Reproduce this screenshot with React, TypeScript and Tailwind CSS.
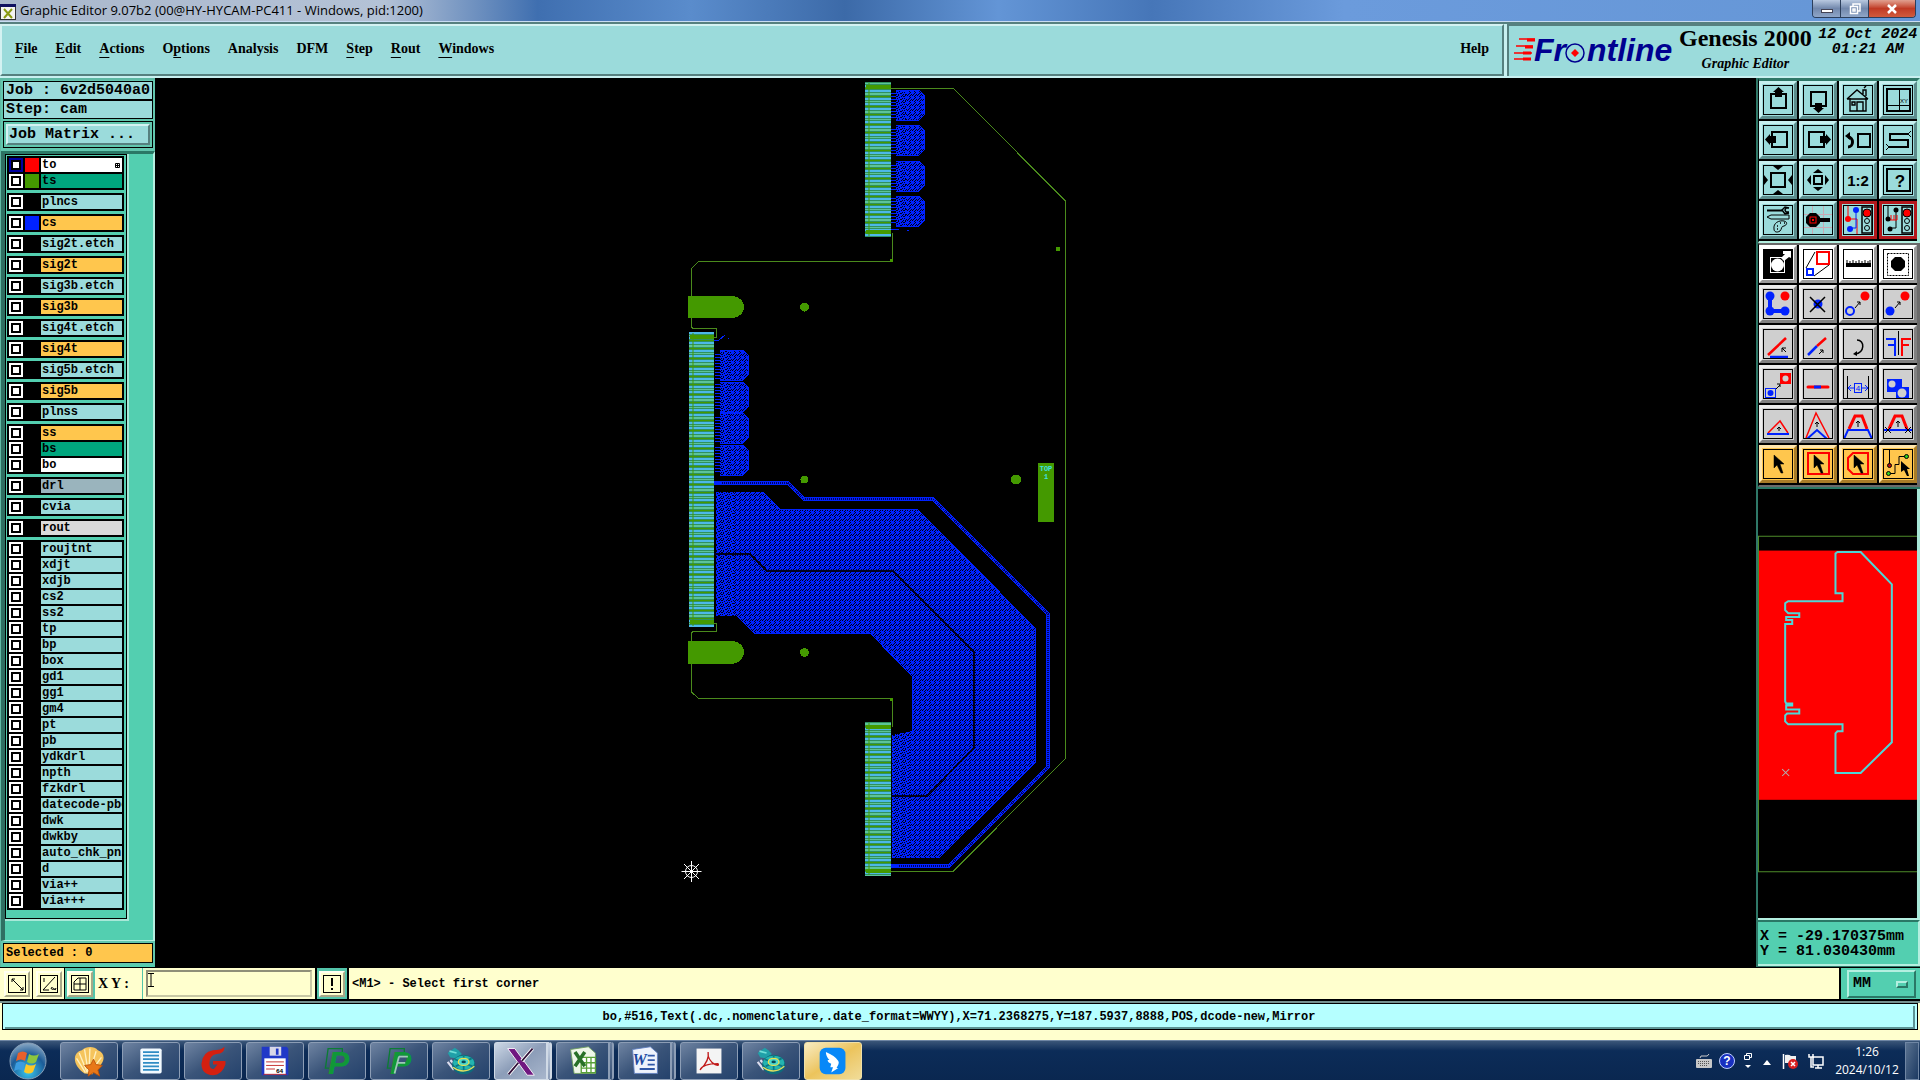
import { ReactNode, useState } from "react";
import { clsx } from "clsx";

interface Layer {
  name: string;
  tone: string;
  swatch?: string;
  on?: boolean;
}

const AQUA = "bg-[#9bdbdb]";
const GOLD = "bg-[#ffc64d]";
const GREEN = "bg-[#00a67e]";
const WHITE = "bg-white";

const layerGroups: Layer[][] = [
  [
    { name: "to", tone: WHITE, swatch: "bg-[#ff0000]", on: true },
    { name: "ts", tone: GREEN, swatch: "bg-[#449900]" },
  ],
  [{ name: "plncs", tone: AQUA }],
  [{ name: "cs", tone: GOLD, swatch: "bg-[#0022ff]" }],
  [{ name: "sig2t.etch", tone: AQUA }],
  [{ name: "sig2t", tone: GOLD }],
  [{ name: "sig3b.etch", tone: AQUA }],
  [{ name: "sig3b", tone: GOLD }],
  [{ name: "sig4t.etch", tone: AQUA }],
  [{ name: "sig4t", tone: GOLD }],
  [{ name: "sig5b.etch", tone: AQUA }],
  [{ name: "sig5b", tone: GOLD }],
  [{ name: "plnss", tone: AQUA }],
  [
    { name: "ss", tone: GOLD },
    { name: "bs", tone: GREEN },
    { name: "bo", tone: WHITE },
  ],
  [{ name: "drl", tone: "bg-[#9ab4bd]" }],
  [{ name: "cvia", tone: AQUA }],
  [{ name: "rout", tone: "bg-[#dadada]" }],
  [
    "roujtnt", "xdjt", "xdjb", "cs2", "ss2", "tp", "bp", "box", "gd1", "gg1",
    "gm4", "pt", "pb", "ydkdrl", "npth", "fzkdrl", "datecode-pbo", "dwk",
    "dwkby", "auto_chk_pnl", "d", "via++", "via+++",
  ].map((name) => ({ name, tone: AQUA })),
];

// [text before the mnemonic, mnemonic, rest]
const menus = [
  ["", "F", "ile"],
  ["", "E", "dit"],
  ["", "A", "ctions"],
  ["O", "p", "tions"],
  ["Analysis", "", ""],
  ["DFM", "", ""],
  ["", "S", "tep"],
  ["", "R", "out"],
  ["", "W", "indows"],
];

/* ---------- tool icons, all on a 30 x 30 grid ---------- */

const B = "#0022ff";
const R = "#ff0000";

interface Tool {
  label: string;
  art: ReactNode;
  kind?: "aqua" | "red" | "white" | "gray" | "gold";
}

const Traffic = () => (
  <>
    <rect x="19" y="2" width="10" height="26" fill="#9bdbdb" stroke="#000" strokeWidth="1.5" />
    <circle cx="24" cy="8" r="4" fill={R} stroke="#000" />
    <circle cx="24" cy="16" r="2.500" fill="none" stroke="#000" />
    <circle cx="24" cy="23" r="2.500" fill="none" stroke="#000" />
  </>
);

const Cursor = () => (
  <path d="M11 6v13l3-3 4 8h2l-3-9h4z" fill="#000" stroke="#000" strokeWidth="0.5" />
);

const viewTools: Tool[] = [
  {
    label: "Pan up",
    art: (
      <>
        <rect x="8" y="9" width="15" height="14" fill="none" stroke="#000" strokeWidth="2" />
        <path d="M15.500 2l5.500 5h-2v5h-7V7h-2z" />
      </>
    ),
  },
  {
    label: "Pan down",
    art: (
      <>
        <rect x="8" y="7" width="15" height="14" fill="none" stroke="#000" strokeWidth="2" />
        <path d="M15.500 28l5.500-5h-2v-5h-7v5h-2z" />
      </>
    ),
  },
  {
    label: "Home",
    art: (
      <g fill="none" stroke="#000" strokeWidth="1.400">
        <path d="M4 14L14 5l11 9M7 13v13h16V13M4 14h21M20 9V5h3v6M21 3l2-2" />
        <path d="M14 26v-9h6v9M9 17h3v3H9z" />
      </g>
    ),
  },
  {
    label: "XY window",
    art: (
      <>
        <rect x="4" y="4" width="23" height="22" fill="none" stroke="#000" strokeWidth="2" />
        <path d="M16.500 4v22M4 20.500h23" stroke="#000" fill="none" />
        <text x="17" y="18" fontSize="6" fontFamily="Liberation Sans">XY</text>
      </>
    ),
  },
  {
    label: "Pan left",
    art: (
      <>
        <rect x="9" y="7" width="15" height="15" fill="none" stroke="#000" strokeWidth="2" />
        <path d="M2 14.500l5-5.500v2h6v7H7v2z" />
      </>
    ),
  },
  {
    label: "Pan right",
    art: (
      <>
        <rect x="6" y="7" width="15" height="15" fill="none" stroke="#000" strokeWidth="2" />
        <path d="M28 14.500l-5-5.500v2h-6v7h6v2z" />
      </>
    ),
  },
  {
    label: "Previous view",
    art: (
      <g fill="none" stroke="#000" strokeWidth="2">
        <rect x="15" y="9" width="12" height="13" />
        <path d="M5 22c6 0 6-10 0-10" strokeWidth="3" />
        <path d="M2 11l5-4v8z" fill="#000" stroke="none" />
      </g>
    ),
  },
  {
    label: "Snake view",
    art: (
      <g fill="none" stroke="#000" strokeWidth="2">
        <path d="M25 9H7v6h18v7H6" />
        <path d="M25 9l3-3M25 9l3 3M6 22l-3-3M6 22l-3 3" strokeWidth="1" />
      </g>
    ),
  },
  {
    label: "Zoom in",
    art: (
      <>
        <rect x="8" y="8" width="14" height="14" fill="none" stroke="#000" strokeWidth="2" />
        <path d="M10 1h10l-5 4zM10 29h10l-5-4zM1 10v10l4-5zM29 10v10l-4-5z" />
      </>
    ),
  },
  {
    label: "Zoom out",
    art: (
      <>
        <rect x="11" y="11" width="8" height="8" fill="none" stroke="#000" strokeWidth="2" />
        <path d="M10 8h10l-5-4zM10 22h10l-5 4zM8 10v10l-4-5zM22 10v10l4-5z" />
      </>
    ),
  },
  {
    label: "Scale 1:2",
    art: (
      <text x="15" y="21" textAnchor="middle" fontSize="15" fontWeight="700" fontFamily="Liberation Sans">
        1:2
      </text>
    ),
  },
  {
    label: "Query",
    art: (
      <>
        <rect x="4" y="4" width="23" height="22" fill="none" stroke="#000" strokeWidth="2" />
        <text x="17" y="22" textAnchor="middle" fontSize="17" fontWeight="700" fontFamily="Liberation Sans">?</text>
      </>
    ),
  },
  {
    label: "Options",
    art: (
      <g fill="none" stroke="#000">
        <path d="M4 5.500h15" strokeWidth="2" />
        <path d="M26 3l-4-1-3 3 3 4 4-1M26 3h-3l-1 2 1 2h3" strokeWidth="1.500" />
        <path d="M4 12l4-2h18v4H8z" />
        <path d="M11 24c-1-6 5-9 10-8 4 1 3 4 0 5-3 0-2 3-4 5-3 2-6 1-6-2z" />
        <path d="M14 21h1M17 18h1M21 18h1M14 24h1" strokeWidth="1.500" />
      </g>
    ),
  },
  {
    label: "Measure point",
    art: (
      <>
        <path d="M0 9.500h30M0 22.500h30M9.500 0v30M20.500 0v30" stroke="#c9a9b4" />
        <path d="M15 15h12" stroke="#000" strokeWidth="4" />
        <path d="M7 8h6l4 4v6l-4 4H7l-4-4v-6z" />
        <rect x="7" y="12" width="6" height="6" fill="none" stroke={R} />
        <rect x="9" y="14" width="2" height="2" fill={R} />
      </>
    ),
  },
  {
    label: "Net check",
    kind: "red",
    art: (
      <>
        <path d="M5 0v14h9v15" fill="none" stroke={R} />
        <path d="M13 4v19H8" fill="none" stroke={B} />
        <circle cx="5" cy="14" r="3" fill={R} />
        <circle cx="13" cy="5" r="3" fill={B} />
        <circle cx="7" cy="24" r="3" fill={B} />
        <Traffic />
      </>
    ),
  },
  {
    label: "Net compare",
    kind: "red",
    art: (
      <>
        <path d="M5 0v14M13 5v18H8" fill="none" stroke="#000" />
        <path d="M5 15h9M8 10v5M11 10v5M14 10v5" stroke={R} fill="none" />
        <circle cx="5" cy="14" r="2.500" />
        <circle cx="13" cy="5" r="2.500" />
        <circle cx="7" cy="24" r="2.500" />
        <Traffic />
      </>
    ),
  },
];

const editTools: Tool[] = [
  {
    label: "Select feature",
    kind: "white",
    art: (
      <>
        <rect x="1" y="1" width="28" height="28" />
        <rect x="7.500" y="8.500" width="14" height="15" fill="none" stroke="#fff" />
        <circle cx="14.500" cy="16" r="6.500" fill="#fff" />
        <path d="M18 9l4-4h-2V2h8v7l-2-1-5 4z" fill="#fff" />
      </>
    ),
  },
  {
    label: "Scale feature",
    kind: "white",
    art: (
      <>
        <path d="M3 19L12 3M11 27l15-11" stroke="#000" />
        <rect x="14" y="3" width="12" height="12" fill="none" stroke={R} strokeWidth="2" />
        <rect x="4" y="20" width="6" height="6" fill="none" stroke={B} strokeWidth="2" />
      </>
    ),
  },
  {
    label: "Ruler",
    kind: "white",
    art: (
      <>
        <path d="M3 14h25v4H3z" />
        <path d="M4 11v4M7 12v3M10 11v4M13 12v3M16 11v4M19 12v3M22 11v4M25 12v3M27 11v4" stroke="#000" />
      </>
    ),
  },
  {
    label: "Pad",
    kind: "white",
    art: (
      <>
        <rect x="4.500" y="4.500" width="21" height="22" fill="none" stroke="#000" strokeDasharray="2 1" />
        <path d="M12 8h6l4 4v6l-4 4h-6l-4-4v-6z" />
      </>
    ),
  },
  {
    label: "Add chain",
    art: (
      <>
        <path d="M7 7v15h15" fill="none" stroke={B} strokeWidth="4" />
        <circle cx="7" cy="7" r="4.500" fill={B} />
        <circle cx="7" cy="22" r="4.500" fill={B} />
        <circle cx="22" cy="22" r="4.500" fill={B} />
        <circle cx="22" cy="7" r="4.500" fill={R} />
      </>
    ),
  },
  {
    label: "Delete",
    art: (
      <>
        <circle cx="15" cy="15" r="4.500" fill={B} />
        <path d="M7 8l15 15M22 8L7 23" stroke="#000" strokeWidth="1.500" />
      </>
    ),
  },
  {
    label: "Copy",
    art: (
      <>
        <circle cx="7" cy="22" r="4" fill="none" stroke={B} strokeWidth="2" />
        <circle cx="22" cy="7" r="4.500" fill={R} />
        <path d="M12 19l5-6M14 13h3v3" stroke="#000" fill="none" />
      </>
    ),
  },
  {
    label: "Move",
    art: (
      <>
        <circle cx="7" cy="22" r="4.500" fill={B} />
        <circle cx="22" cy="7" r="4.500" fill={R} />
        <path d="M12 19l5-6M14 13h3v3" stroke="#000" fill="none" />
      </>
    ),
  },
  {
    label: "Rotate line",
    art: (
      <>
        <path d="M5 26L23 9" stroke={R} strokeWidth="2.500" />
        <path d="M7 28h18" stroke={B} strokeWidth="2.500" />
        <path d="M23 23l-4-4M19 23v-4h4" stroke="#000" fill="none" />
      </>
    ),
  },
  {
    label: "Extend line",
    art: (
      <>
        <path d="M5 26l9-9" stroke={B} strokeWidth="2.500" />
        <path d="M14 17l9-8" stroke={R} strokeWidth="2.500" />
        <path d="M16 25l4-4M17 21h3v3" stroke="#000" fill="none" />
      </>
    ),
  },
  {
    label: "Rotate",
    art: (
      <>
        <path d="M14 11c8 0 8 13-2 14" stroke="#000" strokeWidth="1.500" fill="none" />
        <path d="M10 25l4-3v5z" />
      </>
    ),
  },
  {
    label: "Mirror",
    art: (
      <>
        <path d="M15.500 2v24" stroke="#000" />
        <path d="M3 10h9v17M5 16h7" stroke={B} strokeWidth="2" fill="none" />
        <path d="M28 10h-9v17M26 16h-7" stroke={R} strokeWidth="2" fill="none" />
      </>
    ),
  },
  {
    label: "Substitute",
    art: (
      <>
        <rect x="18" y="5" width="9" height="9" fill={R} stroke={R} strokeWidth="2" />
        <circle cx="22.500" cy="9.500" r="3" fill="#cfcfcf" />
        <rect x="2.500" y="19.500" width="10" height="9" fill="none" stroke={B} />
        <circle cx="7.500" cy="24" r="3" fill={B} />
        <path d="M13 20l4-4M14 15h3v3" stroke="#000" fill="none" />
      </>
    ),
  },
  {
    label: "Break line",
    art: (
      <>
        <path d="M5 18h20" stroke={R} strokeWidth="3" strokeLinecap="round" />
        <path d="M11 18h7" stroke={B} strokeWidth="3" />
      </>
    ),
  },
  {
    label: "Spacing",
    art: (
      <>
        <path d="M4.500 7v22M25.500 7v22" stroke="#000" />
        <path d="M6 19h5M19 19h5M8 16l-3 3 3 3M22 16l3 3-3 3" stroke={B} fill="none" />
        <rect x="11.500" y="14.500" width="7" height="9" fill="none" stroke={B} />
        <text x="15" y="22" textAnchor="middle" fontSize="8" fill={B} fontFamily="Liberation Sans">4</text>
      </>
    ),
  },
  {
    label: "Merge",
    art: (
      <>
        <path d="M4 10h15v8h7v12H13v-7H4z" fill={B} />
        <circle cx="9" cy="15" r="3.500" fill="#cfcfcf" />
        <circle cx="19" cy="24" r="4.500" fill="#cfcfcf" />
      </>
    ),
  },
  {
    label: "Triangle",
    art: (
      <>
        <path d="M5 24L17 12l8 12" stroke={R} strokeWidth="1.500" fill="none" />
        <path d="M4 25h22" stroke={B} strokeWidth="2" />
        <path d="M16 22v-4M14 20l2-2 2 2" stroke="#000" fill="none" />
      </>
    ),
  },
  {
    label: "Corner",
    art: (
      <>
        <path d="M3 29L13 4l13 25" stroke={R} strokeWidth="1.500" fill="none" />
        <path d="M4 30l10-9 10 9" stroke={B} strokeWidth="2" fill="none" />
        <path d="M14 18v-5M12 15l2-2 2 2" stroke="#000" fill="none" />
      </>
    ),
  },
  {
    label: "Chamfer",
    art: (
      <>
        <path d="M6 20L12 7h7l5 13" stroke={R} strokeWidth="3" fill="none" />
        <path d="M1 30l4-9h20l4 9" stroke={B} strokeWidth="2" fill="none" />
        <path d="M15 18v-6M13 14l2-2 2 2" stroke="#000" fill="none" />
      </>
    ),
  },
  {
    label: "Trim",
    art: (
      <>
        <path d="M6 20L12 7h7l5 13" stroke={R} strokeWidth="3" fill="none" />
        <path d="M1 21h28" stroke={B} strokeWidth="2" />
        <path d="M2 18l6 6M8 18l-6 6M22 18l6 6M28 18l-6 6M15 18v-6M13 14l2-2 2 2" stroke="#000" fill="none" />
      </>
    ),
  },
  { label: "Pick", kind: "gold", art: <Cursor /> },
  {
    label: "Pick in box",
    kind: "gold",
    art: (
      <>
        <rect x="5" y="4" width="21" height="21" fill="none" stroke={R} strokeWidth="2" />
        <Cursor />
      </>
    ),
  },
  {
    label: "Pick in polygon",
    kind: "gold",
    art: (
      <>
        <path d="M10 4h15v21H10l-5-5V9z" fill="none" stroke={R} strokeWidth="2" />
        <Cursor />
      </>
    ),
  },
  {
    label: "Pick net",
    kind: "gold",
    art: (
      <>
        <path d="M6.500 1v14M6 24.500h6v-9h4v-8h6" stroke="#000" fill="none" />
        <circle cx="6.500" cy="16.500" r="2" fill="#b01010" stroke="#000" />
        <circle cx="5.500" cy="24.500" r="2" fill="#30d020" stroke="#000" />
        <circle cx="23.500" cy="7.500" r="2" fill="#30d020" stroke="#000" />
        <path d="M18 12v11l3-2 3 6h2l-2-7h3z" />
      </>
    ),
  },
];

const toolTone = {
  aqua: "bg-[#9bdbdb] border-t-[#c6f0f0] border-l-[#c6f0f0] border-b-[#5c8c8c] border-r-[#5c8c8c]",
  red: "bg-[#9bdbdb] border-[#b4181c]",
  white: "bg-white border-t-white border-l-white border-b-[#9a9a9a] border-r-[#9a9a9a]",
  gray: "bg-[#cfcfcf] border-t-[#ececec] border-l-[#ececec] border-b-[#808080] border-r-[#808080]",
  gold: "bg-[#ffc64d] border-t-[#ffe6ae] border-l-[#ffe6ae] border-b-[#a87c28] border-r-[#a87c28]",
};

function ToolGrid({ tools, base }: { tools: Tool[]; base: "aqua" | "gray" }) {
  return (
    <div className="grid grid-cols-4 gap-[2px] bg-black pb-[2px]">
      {tools.map((tool) => (
        <button
          key={tool.label}
          type="button"
          aria-label={tool.label}
          className={clsx(
            "flex h-[38px] items-center justify-center border-[3px]",
            toolTone[tool.kind ?? base]
          )}
        >
          <svg viewBox="0 0 30 30" className="size-[30px] shrink-0">
            {tool.art}
            <rect x="0.500" y="0.500" width="29" height="29" fill="none" stroke="#000" />
          </svg>
        </button>
      ))}
    </div>
  );
}

/* ---------- header ---------- */

function TitleBar() {
  return (
    <header className="flex h-[22px] shrink-0 items-start justify-between border-b border-[#c9dcf2] bg-[linear-gradient(90deg,#a9b7cb_0%,#b4c2d6_20%,#3f6fb0_28%,#5a8ccc_36%,#3c6aa8_44%,#6395d6_52%,#4676b8_60%,#6b9bdc_70%,#6596d6_100%)]">
      <div className="flex items-center gap-1">
        <svg viewBox="0 0 16 16" className="mt-1 size-4">
          <rect x="0.500" y="0.500" width="15" height="15" fill="#f4f4f0" stroke="#333" />
          <path d="M0 0h16v3H0z" fill="#101060" />
          <path d="M4 5l8 9M12 5l-8 9" stroke="#8a9a10" strokeWidth="2" />
        </svg>
        <h1 className="font-['Open_Sans',sans-serif] text-[13px] leading-5 text-black">
          Graphic Editor 9.07b2 (00@HY-HYCAM-PC411 - Windows, pid:1200)
        </h1>
      </div>
      <div className="mr-1 flex h-[18px] overflow-hidden rounded-b border border-t-0 border-[#2c3f5c]">
        <button type="button" aria-label="Minimize" className="flex w-7 items-center justify-center border-r border-[#2c3f5c] bg-linear-to-b from-[#b9c9e0] via-[#7288ac] to-[#8fa6c8]">
          <svg viewBox="0 0 12 12" className="size-3">
            <rect x="0.500" y="6.500" width="11" height="3" fill="#fff" stroke="#445" />
          </svg>
        </button>
        <button type="button" aria-label="Restore" className="flex w-7 items-center justify-center border-r border-[#2c3f5c] bg-linear-to-b from-[#b9c9e0] via-[#7288ac] to-[#8fa6c8]">
          <svg viewBox="0 0 12 12" className="size-3" fill="none" stroke="#fff" strokeWidth="1.500">
            <path d="M4 3V1h7v7H9" />
            <rect x="1.500" y="3.500" width="7" height="7" />
            <rect x="4" y="6" width="2" height="2" />
          </svg>
        </button>
        <button type="button" aria-label="Close" className="flex w-[46px] items-center justify-center bg-linear-to-b from-[#e0a090] via-[#c03a24] to-[#d05a3c]">
          <svg viewBox="0 0 12 12" className="size-3">
            <path d="M2 2l8 8M10 2l-8 8" stroke="#fff" strokeWidth="2.500" />
          </svg>
        </button>
      </div>
    </header>
  );
}

function FrontlineLogo() {
  return (
    <svg viewBox="0 0 162 36" className="h-9 w-[162px] shrink-0" role="img" aria-label="Frontline">
      <g stroke={R} strokeWidth="1.500">
        <path d="M6 6h16M3 13h17M1 20h18M1 26h17" />
        <path d="M14 7h8M12 14h8M10 20h8M10 26h8" strokeWidth="3" />
      </g>
      <g fill="#000090" fontFamily="Liberation Sans" fontWeight="700" fontStyle="italic" fontSize="32">
        <text x="21" y="28">Fr</text>
        <text x="74" y="28">ntline</text>
      </g>
      <circle cx="62" cy="20" r="9" fill="#9bdbdb" stroke="#000090" strokeWidth="1.500" />
      <path d="M62 16l4 4-4 4-4-4z" fill={R} />
    </svg>
  );
}

function MenuBar() {
  const frame =
    "border-2 border-t-[#d4f2f2] border-l-[#d4f2f2] border-b-[#56807f] border-r-[#56807f] bg-[#9bdbdb]";
  return (
    <div className="flex h-14 shrink-0 border-t-2 border-b-2 border-t-[#56807f] border-b-[#c8f0f0] bg-[#c8f0f0] font-['Liberation_Serif',serif] font-bold text-black">
      <nav className={clsx("flex flex-1 items-center gap-[18px] px-[13px] pb-[2px] text-sm", frame)}>
        {menus.map(([before, key, rest]) => (
          <button key={before + key + rest} type="button">
            {before}
            <span className="underline underline-offset-4">{key}</span>
            {rest}
          </button>
        ))}
        <button type="button" className="ml-auto">Help</button>
      </nav>
      <div className="ml-[3px] flex w-[413px] items-center gap-1 border-t-2 border-l-2 border-[#56807f] bg-[#9bdbdb] pl-1">
        <FrontlineLogo />
        <div className="flex flex-col items-center pb-[2px]">
          <span className="text-2xl leading-6">Genesis 2000</span>
          <span className="mt-1 text-sm leading-5 italic">Graphic Editor</span>
        </div>
        <div className="flex flex-1 flex-col items-center self-start pt-px font-['Liberation_Mono',monospace] text-[15px] leading-[15px] italic">
          <span>12 Oct 2024</span>
          <span>01:21 AM</span>
        </div>
      </div>
    </div>
  );
}

/* ---------- left side ---------- */

function LayerRow({ layer }: { layer: Layer }) {
  const [on, setOn] = useState(!!layer.on);
  return (
    <label className="flex h-[14px] gap-[2px]">
      <span className={clsx("size-[14px] p-[2px]", on ? "bg-[#0000a0]" : "bg-white")}>
        <input
          type="checkbox"
          checked={on}
          onChange={() => setOn(!on)}
          className="block size-[10px] appearance-none border-2 border-black bg-white"
        />
      </span>
      <span className={clsx("w-[14px]", layer.swatch ?? "bg-black")} />
      <span className={clsx("flex flex-1 items-center justify-between overflow-hidden pl-px", layer.tone)}>
        <span className="whitespace-nowrap">{layer.name}</span>
        {layer.on && (
          <svg viewBox="0 0 5 5" className="mr-[2px] size-[5px] shrink-0">
            <path d="M0.500 0.500h4v4h-4zM2.500 0v5M0 2.500h5" fill="none" stroke="#000" />
          </svg>
        )}
      </span>
    </label>
  );
}

function LayerPanel() {
  return (
    <aside className="flex w-[155px] shrink-0 flex-col border-t-2 border-l border-[#5fb9a4] bg-[#53cfb0] font-['Liberation_Mono',monospace] font-bold text-black">
      <div className="bg-[#62c6ae] px-[2px] pt-px pb-[3px] text-[15px] leading-[17px]">
        <div className="border border-black bg-[#9bdbdb] pl-[2px] whitespace-pre">Job : 6v2d5040a0</div>
        <div className="border border-black bg-[#9bdbdb] pl-[2px] whitespace-pre">Step: cam</div>
        <div className="mt-[2px] border border-black p-[2px]">
          <button
            type="button"
            className="block w-full border-2 border-t-[#d4f2f2] border-l-[#d4f2f2] border-b-[#56807f] border-r-[#56807f] bg-[#9bdbdb] pl-px text-left"
          >
            Job Matrix ...
          </button>
        </div>
      </div>

      <div className="flex-1 border-t-[3px] border-r-2 border-b border-l-4 border-t-[#2a7866] border-r-[#b4efe0] border-b-[#b4efe0] border-l-[#2f6f62] pr-6">
        <div className="border-r-2 border-b-2 border-[#a8e8d8]">
          <div className="flex flex-col gap-[3px] border border-black pt-px pr-[2px] pb-[8px] pl-px text-xs leading-[14px]">
            {layerGroups.map((group) => (
              <div key={group[0].name} className="flex flex-col gap-[2px] border-2 border-black bg-black">
                {group.map((layer) => (
                  <LayerRow key={layer.name} layer={layer} />
                ))}
              </div>
            ))}
          </div>
        </div>
      </div>

      <div className="mb-[2px] border-2 border-[#62c6ae]">
        <div className="border border-black bg-[#ffc64d] pl-[2px] text-xs leading-[18px]">Selected : 0</div>
      </div>
    </aside>
  );
}

/* ---------- board drawing ---------- */

const boardOutline =
  "M891 88.500H953.500L1065.500 201V758.500L953 871.500H891M892.500 233V261.500H698.500L691.500 268.500V327L693 328.500H716.500V337H713M713 623H716.500V631.500H693L691.500 633V692L698.500 698.500H892.500V727";

const copperArea =
  "M716 492H763L780 509H917L1035 628V763L939 858H892V735L912 731V676L870 633H754L737 616H716Z";

const topPads = [90, 125, 161, 196];
const sidePads = [350, 382, 413, 445];

function Connector({ x, y, width, height }: { x: number; y: number; width: number; height: number }) {
  return (
    <g>
      <rect x={x} y={y} width={width} height={height} fill="url(#pins)" />
      <rect x={x + 1} y={y + 3} width={width - 1} height="4" fill="#449900" />
      <rect x={x + 1} y={y + height - 7} width={width - 1} height="4" fill="#449900" />
      <rect x={x + 3} y={y + 1} width="2" height={height - 2} fill="#449900" fillOpacity="0.5" />
    </g>
  );
}

function Pad({ x, y }: { x: number; y: number }) {
  return (
    <g>
      <rect x={x - 5} y={y + 2} width="8" height="27" fill="url(#stubs)" />
      <rect x={x} y={y} width="10" height="30" fill="url(#fanout)" />
      <path d={`M${x + 10} ${y}h13l5 5v20l-5 5h-13z`} fill="url(#copper)" />
      <path d={`M${x} ${y}h23l5 5v20l-5 5h-23`} fill="none" stroke={B} />
    </g>
  );
}

function BoardCanvas() {
  return (
    <main className="min-w-0 flex-1 bg-black">
      <svg viewBox="155 78 1601 889" className="h-full w-full" shapeRendering="crispEdges" role="img" aria-label="Board">
        <defs>
          <pattern id="copper" width="5" height="5" patternUnits="userSpaceOnUse">
            <rect width="5" height="5" fill={B} />
            <path d="M0 0h1v1H0zM2 0h1v1H2zM4 1h1v1H4zM0 2h1v1H0zM4 3h1v1H4zM1 4h1v1H1zM3 4h1v1H3z" fill="#000018" />
          </pattern>
          <pattern id="fanout" width="7" height="6" patternUnits="userSpaceOnUse">
            <rect width="7" height="6" fill={B} />
            <path d="M0 0h2v1H0zM3 1h1v1H3zM5 0h1v1H5zM1 2h1v1H1zM4 3h2v1H4zM0 4h1v1H0zM2 4h1v2H2zM6 5h1v1H6zM6 2h1v1H6z" fill="#000018" />
          </pattern>
          <pattern id="stubs" width="8" height="3" patternUnits="userSpaceOnUse">
            <rect width="8" height="1" fill={B} />
          </pattern>
          <pattern id="pins" width="26" height="18" patternUnits="userSpaceOnUse">
            <rect width="26" height="18" fill="#2f9060" />
            <path d="M0 0h26v2H0zM0 8h26v2H0zM0 13h26v2H0z" fill="#4db8e8" />
            <path d="M0 3h26v2H0zM0 11h26v1H0z" fill="#5cc49a" />
            <path d="M0 6h26v1H0zM0 16h26v1H0z" fill="#449900" />
          </pattern>
        </defs>

        <path d={boardOutline} fill="none" stroke="#4a8a1c" />

        <g fill="#449900">
          <path d="M688 296h45q11 2 11 11t-11 11h-45z" />
          <path d="M688 641h45q11 2 11 11t-11 12h-45z" />
          <circle cx="804.500" cy="307" r="4.500" />
          <circle cx="804.500" cy="479.500" r="4" />
          <circle cx="1016" cy="479.500" r="5" />
          <circle cx="804.500" cy="652.500" r="4.500" />
          <rect x="1056" y="247" width="4" height="4" />
          <rect x="1038" y="463" width="16" height="59" />
          <rect x="890" y="259" width="3" height="3" />
          <rect x="890" y="698" width="3" height="3" />
        </g>
        <g fill="#40e0e0" fontFamily="Liberation Mono" fontSize="7" fontWeight="700" textAnchor="middle">
          <text x="1046" y="471">TOP</text>
          <text x="1046" y="479">1</text>
        </g>

        {topPads.map((y) => <Pad key={y} x={896} y={y} />)}
        {sidePads.map((y) => <Pad key={y} x={720} y={y} />)}
        <path d="M714 340h5l6-5M728 338h1M891 229h8M907 230h2" stroke={B} fill="none" />

        <path d={copperArea} fill="url(#copper)" />
        <path d="M716 492h18v124h-18zM892 735h18v122h-18z" fill="url(#fanout)" />
        <path d="M763 492L780 509H917L1035 628V763L939 858M912 731V676L870 633H754L737 616" fill="none" stroke={B} />
        <path d="M714 554H750L767 571H893L974 652V748L927 796H891" fill="none" stroke="#000020" strokeWidth="2" />

        {/* guard trace */}
        <path d="M714 483H788L804 499H933L1048 614V767L949 866H891" fill="none" stroke={B} strokeWidth="4" />
        <path d="M722 483H788L804 499H933L1048 614V767L949 866H898" fill="none" stroke="#000060" strokeWidth="2" strokeDasharray="1 1" />

        <Connector x={865} y={82} width={26} height={155} />
        <Connector x={689} y={332} width={25} height={295} />
        <Connector x={865} y={722} width={26} height={154} />

        <g stroke="#fff" fill="none" shapeRendering="auto">
          <path d="M681.500 871.500h20M691.500 861v21M684 864l15 15M699 864l-15 15" />
          <circle cx="691.500" cy="871.500" r="6" />
        </g>
      </svg>
    </main>
  );
}

/* ---------- right side ---------- */

function Overview() {
  return (
    <div className="min-h-0 flex-1 border-t-2 border-b-2 border-t-[#2a7866] border-b-[#b4efe0] bg-black">
      <svg viewBox="0 0 161 432" preserveAspectRatio="none" className="h-full w-full" role="img" aria-label="Board overview">
        <rect x="0" y="62" width="158" height="251" fill="#ff0000" />
        <path d="M158 47.500H0.500V385.500H158" fill="none" stroke="#4d8a2a" />
        <path
          d="M102 63.500L133 96V255L102 286H77V246L79 244H84V237H30L27 234V228L29 226H41V222H28V218H34V216H28L27 214V136H34V132H28V129H41V125H30L27 122V115L30 113H84V105H77V65L79 63.500Z"
          fill="none"
          stroke="#4dd8d8"
          strokeWidth="2"
        />
        <path d="M24 282l7 7M31 282l-7 7" stroke="#b0b0b0" fill="none" />
        <path d="M158 0h3v432h-3z" fill="#a8e8d8" />
      </svg>
    </div>
  );
}

function ToolPanel() {
  return (
    <aside className="flex w-[164px] shrink-0 flex-col border-l-2 border-[#2f7868] bg-[#2f7868]">
      <div className="border-t-[3px] border-r-[3px] border-b-2 border-l border-t-[#2f7868] border-r-[#a8e8d8] border-b-[#b4efe0] border-l-black">
        <ToolGrid tools={viewTools} base="aqua" />
      </div>
      <div className="border-t-2 border-r-[3px] border-b-2 border-l border-[#6a6a6a] border-l-black">
        <ToolGrid tools={editTools} base="gray" />
      </div>
      <Overview />
      <div className="mb-px border-t-2 border-r-2 border-b-2 border-t-[#2a7866] border-r-[#b4efe0] border-b-[#b4efe0] bg-[#53cfb0] pt-[7px] pb-[5px] pl-[2px] font-['Liberation_Mono',monospace] text-[15px] leading-[15px] font-bold whitespace-pre text-black">
        <div>X = -29.170375mm</div>
        <div>Y = 81.030430mm</div>
      </div>
    </aside>
  );
}

/* ---------- bottom bars ---------- */

function CommandButton({ label, teal, children }: { label: string; teal?: boolean; children: ReactNode }) {
  return (
    <div
      className={clsx(
        "flex shrink-0 items-center justify-center",
        teal ? "w-[30px] bg-[#53c4aa]" : "w-8 border-r border-black bg-[#ffffce]"
      )}
    >
      <button
        type="button"
        aria-label={label}
        className="flex size-[26px] items-center justify-center border-2 border-t-[#fffff0] border-l-[#fffff0] border-b-[#a8a888] border-r-[#a8a888] bg-[#ffffce]"
      >
        <svg viewBox="0 0 20 20" className="size-5 shrink-0" fill="none" stroke="#000">
          <rect x="1.500" y="1.500" width="17" height="17" />
          {children}
        </svg>
      </button>
    </div>
  );
}

function CommandBar() {
  return (
    <div className="flex h-[34px] shrink-0 border-t border-b-2 border-black bg-[#ffffce] pl-px font-['Liberation_Mono',monospace] text-xs font-bold text-black">
      <CommandButton label="Two point">
        <path d="M5 5l11 11M5 8V5h3M16 13v3h-3" />
      </CommandButton>
      <CommandButton label="Angle">
        <path d="M4 16L16 3M4 16h6M5 4v4" />
        <path d="M12 14c2-2 4 4 5 0M12 14c1 3 3 0 5 2" />
      </CommandButton>
      <CommandButton label="Grid" teal>
        <path d="M4 16V8l4-4h8v12zM4 10h12M10 4v12" />
      </CommandButton>
      <label htmlFor="xy" className="flex w-12 items-center border-r border-[#53c4aa] pl-[3px] font-['Liberation_Serif',serif] text-sm whitespace-pre">
        X Y :
      </label>
      <div className="flex w-[172px] items-center px-[3px]">
        <input
          id="xy"
          type="text"
          className="h-[27px] w-full border-2 border-t-[#8f8f78] border-l-[#8f8f78] border-b-[#c8c8a4] border-r-[#c8c8a4] bg-[#ffffce] px-1 outline-none"
        />
        <svg viewBox="0 0 6 14" className="-ml-[164px] mb-2 h-[14px] w-[6px] shrink-0">
          <path d="M0 0.500h6M0 13.500h6M3 0v14" stroke="#000" />
        </svg>
      </div>
      <div className="ml-auto flex flex-1 border-l-2 border-black">
        <CommandButton label="Confirm" teal>
          <path d="M10 4v8M10 14v2" strokeWidth="2" />
        </CommandButton>
        <p className="flex flex-1 items-center border-l-2 border-black pl-[3px]">&lt;M1&gt; - Select first corner</p>
      </div>
      <div className="flex w-[81px] items-center border-l-2 border-black bg-[#53cfb0] pr-1 pl-[6px]">
        <div className="relative w-full">
          <select
            aria-label="Units"
            defaultValue="MM"
            className="h-7 w-full appearance-none border-2 border-t-[#b4efe0] border-l-[#b4efe0] border-b-[#2a7866] border-r-[#2a7866] pl-1 text-[15px] font-bold outline-none"
          >
            <option>MM</option>
            <option>INCH</option>
          </select>
          <span className="pointer-events-none absolute top-[11px] right-2 h-[7px] w-3 border-2 border-t-[#b4efe0] border-l-[#b4efe0] border-b-[#2a7866] border-r-[#2a7866]" />
        </div>
      </div>
    </div>
  );
}

function MessageBar() {
  return (
    <div className="h-[39px] shrink-0 border-t-2 border-[#74908e] bg-[#ffffce]">
      <div className="mx-[2px] h-[27px] border border-black bg-[#b5ffff] p-[2px]">
        <p className="border-r-2 border-b-2 border-[#5c9494] pt-px text-center font-['Liberation_Mono',monospace] text-xs leading-5 font-bold text-black">
          bo,#516,Text(.dc,.nomenclature,.date_format=WWYY),X=71.2368275,Y=187.5937,8888,POS,dcode-new,Mirror
        </p>
      </div>
    </div>
  );
}

/* ---------- taskbar, icons on a 36 x 36 grid ---------- */

const Snail = () => (
  <>
    <path d="M3 9l8-6 4 3 4 4-7 5-6-1z" fill="#20a0a8" />
    <path d="M5 7l8 2" stroke="#70e0d8" strokeWidth="2" />
    <path d="M3 19l7 9M6 17l6 6" stroke="#dde" strokeWidth="2.500" />
    <ellipse cx="21" cy="22" rx="13" ry="11" fill="#0c6c7c" />
    <ellipse cx="21" cy="20" rx="12" ry="8" fill="#24b4b0" />
    <path d="M11 16l20 8M12 24l18-9M21 12v17" stroke="#0e7884" strokeWidth="2" />
    <ellipse cx="21" cy="19" rx="6" ry="4" fill="#48d8d0" stroke="#e8e050" strokeWidth="1.500" />
    <ellipse cx="21" cy="19" rx="2.500" ry="1.500" fill="#084858" />
    <path d="M9 25q12 9 24-1" stroke="#e0e060" strokeWidth="1.500" fill="none" />
  </>
);

const apps: { label: string; art: ReactNode; tone?: "active" | "alert" | "stack" }[] = [
  {
    label: "Shell",
    art: (
      <>
        <path d="M13 32C-2 22 0 8 10 6c5-5 14-5 18 0 9 3 9 14-3 22l-3 5z" fill="#f5c45c" />
        <path d="M14 31L4 15M16 31L7 9M17 30L13 5M18 30L19 4M19 30L26 7M20 30L32 14" stroke="#fff0c0" strokeWidth="1.500" />
        <path d="M23 16l3 6 7 1-5 5 2 7-7-4-6 4 1-7-5-5 7-1z" fill="#e87818" stroke="#b85008" />
      </>
    ),
  },
  {
    label: "Notes",
    art: (
      <>
        <rect x="6" y="4" width="24" height="28" rx="2" fill="#f2faff" />
        <path d="M9 8h18M9 12h18M9 16h18M9 20h18M9 24h18M9 28h18" stroke="#2f8cc4" strokeWidth="2" />
      </>
    ),
  },
  {
    label: "Genesis",
    art: <path d="M31 2q0 8-9 8-8 1-8 11 0 6 5 6l4-5h-5v-4h14v4q-4 12-14 12Q5 33 5 21 6 8 18 6q9 0 13-4z" fill="#d42010" />,
  },
  {
    label: "Disk",
    art: (
      <>
        <path d="M3 2h28l2 2v30H3z" fill="#2038c8" />
        <rect x="12" y="2" width="13" height="10" fill="#d8d8e8" />
        <rect x="19" y="4" width="3" height="7" fill="#2038c8" />
        <rect x="6" y="15" width="24" height="18" fill="#fff" />
        <path d="M8 19h20M8 23h20M8 27h10M5 33h26" stroke="#c02020" />
        <text x="19" y="31" fontSize="7" fontFamily="Liberation Mono" fontWeight="700">64</text>
      </>
    ),
  },
  {
    label: "Power",
    art: (
      <>
        <path d="M24 8V4H8L5 26h4" fill="none" stroke="#0c7c34" strokeWidth="1.500" />
        <text x="8" y="33" fontSize="36" fontWeight="700" fontStyle="italic" fill="#109838" fontFamily="Liberation Sans">P</text>
      </>
    ),
  },
  {
    label: "Frame",
    art: (
      <>
        <path d="M24 8V4H8L5 26h4" fill="none" stroke="#0c7c34" strokeWidth="1.500" />
        <text x="8" y="33" fontSize="36" fontWeight="700" fontStyle="italic" fill="#109838" fontFamily="Liberation Sans">P</text>
        <path d="M18 13h10M16 20h9M18 13l-5 19" stroke="#a0c8b8" strokeWidth="2" />
      </>
    ),
  },
  { label: "Toolkit", art: <Snail /> },
  {
    label: "X server",
    tone: "active",
    art: (
      <>
        <path d="M3 4h8l22 30h-8z" fill="#701880" stroke="#fff" />
        <path d="M31 4L19 18M15 20L4 33" stroke="#fff" strokeWidth="4" />
        <path d="M31 4L19 18M15 20L4 33" stroke="#301038" strokeWidth="2" />
      </>
    ),
  },
  {
    label: "Excel",
    tone: "stack",
    art: (
      <>
        <path d="M4 5l20-3 8 7v23H8z" fill="#eef6e8" stroke="#70a060" />
        <path d="M16 14h16v17H16zM16 20h16M16 26h16M22 14v17M27 14v17" fill="#fff" stroke="#58a038" strokeWidth="1.500" />
        <path d="M9 8l11 16M20 8L9 24" stroke="#287028" strokeWidth="4" />
      </>
    ),
  },
  {
    label: "Word",
    tone: "stack",
    art: (
      <>
        <path d="M4 5l20-3 8 7v23H6z" fill="#eef3fc" stroke="#6080c0" />
        <path d="M21 12h8M21 17h8M21 22h8M12 27h17" stroke="#3058a8" strokeWidth="2" />
        <text x="4" y="23" fontSize="18" fontWeight="700" fontStyle="italic" fill="#2048a0" fontFamily="Liberation Serif">W</text>
      </>
    ),
  },
  {
    label: "Acrobat",
    art: (
      <>
        <rect x="4" y="4" width="28" height="28" fill="#f4f4f4" />
        <path d="M17 8q2 9-9 20 3-7 20-7 2 3-3 1-9-5-8-14z" fill="none" stroke="#c01818" strokeWidth="1.500" />
      </>
    ),
  },
  { label: "Toolkit 2", art: <Snail /> },
  {
    label: "DingTalk",
    tone: "alert",
    art: (
      <>
        <rect x="3" y="3" width="29" height="30" rx="7" fill="#0888f8" />
        <path d="M10 8q10 4 14 10 1 2 0 4l-2 4h2l-8 5 2-6h-3l1-4q-4-1-4-4h2q-4-4-4-9z" fill="#fff" />
      </>
    ),
  },
];

function Taskbar() {
  return (
    <footer className="flex h-10 shrink-0 items-center border-t border-[#6f86a4] bg-linear-to-b from-[#3b5678] via-[#0c2c58] via-25% to-[#0a2750]">
      <button type="button" aria-label="Start" className="mr-3 ml-2">
        <svg viewBox="0 0 40 40" className="size-10">
          <defs>
            <radialGradient id="orb" cx="0.5" cy="0.8" r="0.8">
              <stop offset="0" stopColor="#38c8f0" />
              <stop offset="0.6" stopColor="#1c5c98" />
              <stop offset="1" stopColor="#8aa8c4" />
            </radialGradient>
          </defs>
          <circle cx="20" cy="20" r="18" fill="url(#orb)" stroke="#88a0b8" />
          <path d="M10 12q5-3 9 0l-2 8q-4-3-9 0z" fill="#e8602c" />
          <path d="M21 13q5 3 10 0l-3 8q-4 3-9 0z" fill="#8cc63e" />
          <path d="M8 22q4-3 9 0l-2 8q-4-3-9 0z" fill="#3c9ce0" />
          <path d="M18 23q5 3 10 0l-3 8q-4 3-9 0z" fill="#fcc828" />
        </svg>
      </button>
      <div className="flex gap-1">
        {apps.map((app) => (
          <button
            key={app.label}
            type="button"
            aria-label={app.label}
            className={clsx(
              "flex h-[38px] w-[58px] items-center justify-center rounded-[3px] border",
              !app.tone && "border-[#8c9db5] bg-linear-to-br from-[#6f84a2] via-[#3a5479] to-[#24426c]",
              app.tone === "stack" && "border-r-[6px] border-double border-[#8c9db5] bg-linear-to-br from-[#6f84a2] via-[#3a5479] to-[#24426c]",
              app.tone === "active" && "border-r-[6px] border-double border-[#d0dae6] bg-linear-to-br from-[#cdd8e6] via-[#8c9db8] to-[#a8b6cc]",
              app.tone === "alert" && "border-[#f0e0a8] bg-linear-to-br from-[#f8ecc0] via-[#ecc45c] to-[#f0dc98]"
            )}
          >
            <svg viewBox="0 0 36 36" className="size-8">{app.art}</svg>
          </button>
        ))}
      </div>
      <div className="ml-auto flex items-center gap-[6px] pr-px">
        <svg viewBox="0 0 18 18" className="size-[18px]">
          <rect x="1" y="7" width="16" height="9" rx="1" fill="#c8c8c8" />
          <path d="M3 9.500h12M3 11.500h12M5 13.500h8" stroke="#555" strokeDasharray="1 1" />
          <path d="M5 6q0-3 4-2t5-2" stroke="#ccc" fill="none" />
        </svg>
        <svg viewBox="0 0 16 16" className="size-4">
          <circle cx="8" cy="8" r="7.500" fill="#1830c0" stroke="#c0d0ff" />
          <text x="8" y="12" textAnchor="middle" fontSize="12" fontWeight="700" fill="#fff" fontFamily="Liberation Sans">?</text>
        </svg>
        <svg viewBox="0 0 10 18" className="ml-[2px] h-[18px] w-[10px]" fill="none" stroke="#fff">
          <path d="M3.500 3V1.500h5v4H7M1.500 3.500h5v4h-5z" />
          <path d="M2 13h6l-3 3z" fill="#fff" stroke="none" />
        </svg>
        <svg viewBox="0 0 10 6" className="mx-1 mt-1 h-[5px] w-2">
          <path d="M0 6l5-6 5 6z" fill="#fff" />
        </svg>
        <svg viewBox="0 0 18 18" className="size-[18px]">
          <path d="M2.500 2v15" stroke="#fff" strokeWidth="1.500" />
          <path d="M4 3q4-1 6 1h5v7H4z" fill="#f0f0f0" />
          <circle cx="12" cy="12" r="5" fill="#d82020" />
          <path d="M10 10l4 4M14 10l-4 4" stroke="#fff" strokeWidth="1.500" />
        </svg>
        <svg viewBox="0 0 18 18" className="ml-[2px] size-[18px]" fill="none" stroke="#fff" strokeWidth="1.500">
          <path d="M6 5h10v8H6zM8 16h7M11 13v3" />
          <path d="M2 2v3h4V2M4 5v10h3" />
        </svg>
        <div className="w-[72px] text-center font-['Open_Sans',sans-serif] text-xs leading-[18px] text-white">
          <div>1:26</div>
          <div>2024/10/12</div>
        </div>
        <button type="button" aria-label="Show desktop" className="-ml-1 h-[38px] w-[14px] border border-[#6f86a4] bg-linear-to-br from-[#5a7290] to-[#1c3a62]" />
      </div>
    </footer>
  );
}

export default function App() {
  return (
    <div className="flex h-screen w-full flex-col overflow-hidden bg-black">
      <TitleBar />
      <MenuBar />
      <div className="flex min-h-0 flex-1">
        <LayerPanel />
        <BoardCanvas />
        <ToolPanel />
      </div>
      <CommandBar />
      <MessageBar />
      <Taskbar />
    </div>
  );
}
